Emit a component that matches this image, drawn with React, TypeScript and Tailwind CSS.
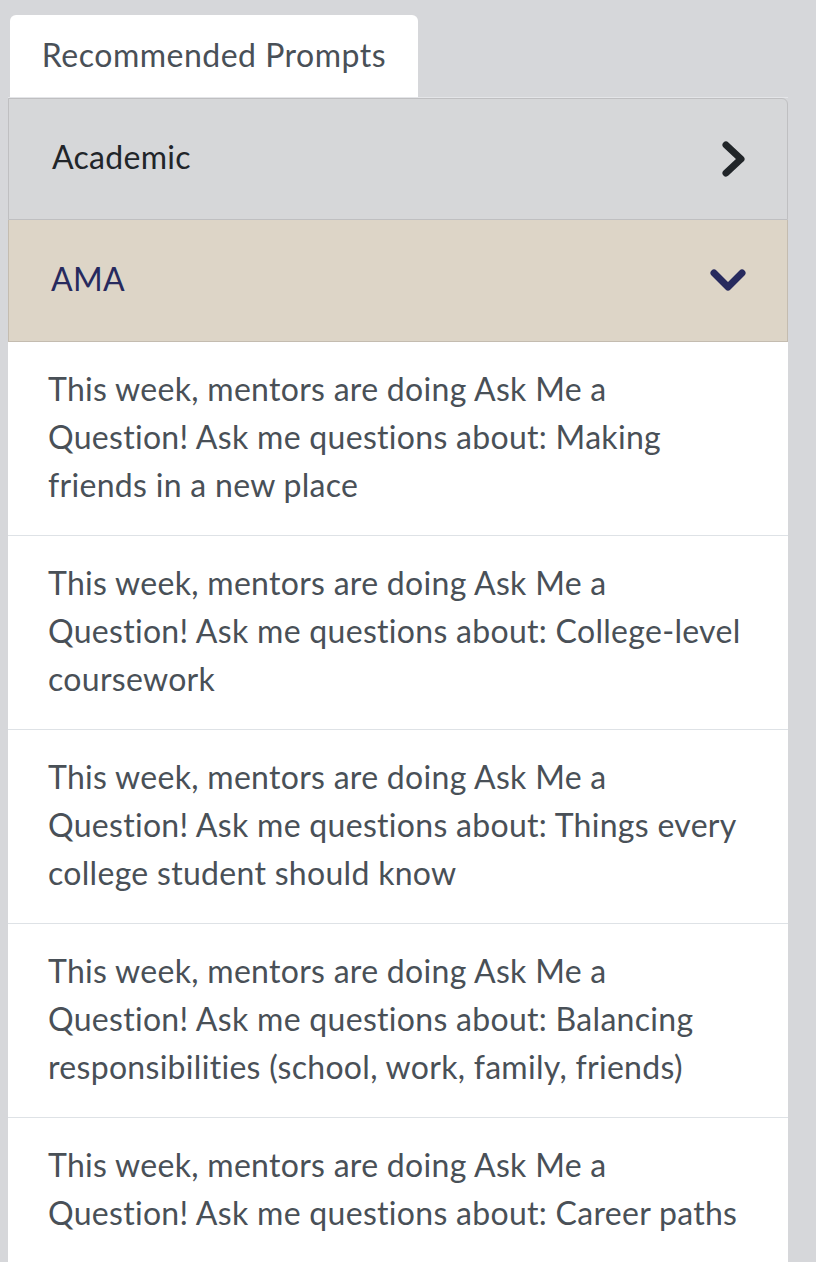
import React from 'react';

const prompts: React.ReactNode[] = [
  'Making friends in a new place',
  <span className="whitespace-nowrap">College-level</span>,
  'Things every college student should know',
  'Balancing responsibilities (school, work, family, friends)',
  'Career paths',
];

const ChevronRight = () => (
  <svg width="26" height="38" viewBox="0 0 26 38" className="text-[#212529]">
    <path d="M5 5 L20 19 L5 33" fill="none" stroke="currentColor" strokeWidth="7" strokeLinecap="round" strokeLinejoin="round" />
  </svg>
);

const ChevronDown = () => (
  <svg width="38" height="26" viewBox="0 0 38 26" className="text-[#272a5e]">
    <path d="M5 5 L19 19 L33 5" fill="none" stroke="currentColor" strokeWidth="7" strokeLinecap="round" strokeLinejoin="round" />
  </svg>
);

export default function App() {
  return (
    <div className="min-h-screen w-[816px] bg-[#d6d7da] font-['Lato',sans-serif] tracking-[0.3px] overflow-hidden">
      <div className="w-[780px] ml-2 pt-[15px]">
        {/* tabs */}
        <div className="flex border-b border-[#e4e5e8]">
          <div className="ml-[2px] w-[408px] h-[82px] pb-[2px] bg-white rounded-t-md flex items-center justify-center text-[32px] tracking-[0.5px] text-[#495057]">
            Recommended Prompts
          </div>
        </div>

        {/* Academic */}
        <div className="h-[122px] bg-[#d6d7d9] border border-[#bfbfc1] rounded-tr-md flex items-center justify-between pl-[43px] pr-[40px]">
          <span className="text-[32px] text-[#212529] -mt-1">Academic</span>
          <ChevronRight />
        </div>

        {/* AMA */}
        <div className="h-[122px] bg-[#ddd5c7] border border-t-0 border-[#c4bcb0] flex items-center justify-between pl-[42px] pr-[40px]">
          <span className="text-[32px] text-[#272a5e] -mt-1">AMA</span>
          <ChevronDown />
        </div>

        {/* prompt list */}
        <div className="bg-white">
          {prompts.map((topic, i) => (
            <div
              key={i}
              className="pl-10 pr-[34px] pt-[23px] pb-[26px] border-b border-[#dee2e6] text-[32px] leading-[48px] text-[#495057]"
            >
              This week, mentors are doing Ask Me a Question! Ask me questions about: {topic}
              {i === 1 && ' coursework'}
            </div>
          ))}
        </div>
      </div>
    </div>
  );
}
